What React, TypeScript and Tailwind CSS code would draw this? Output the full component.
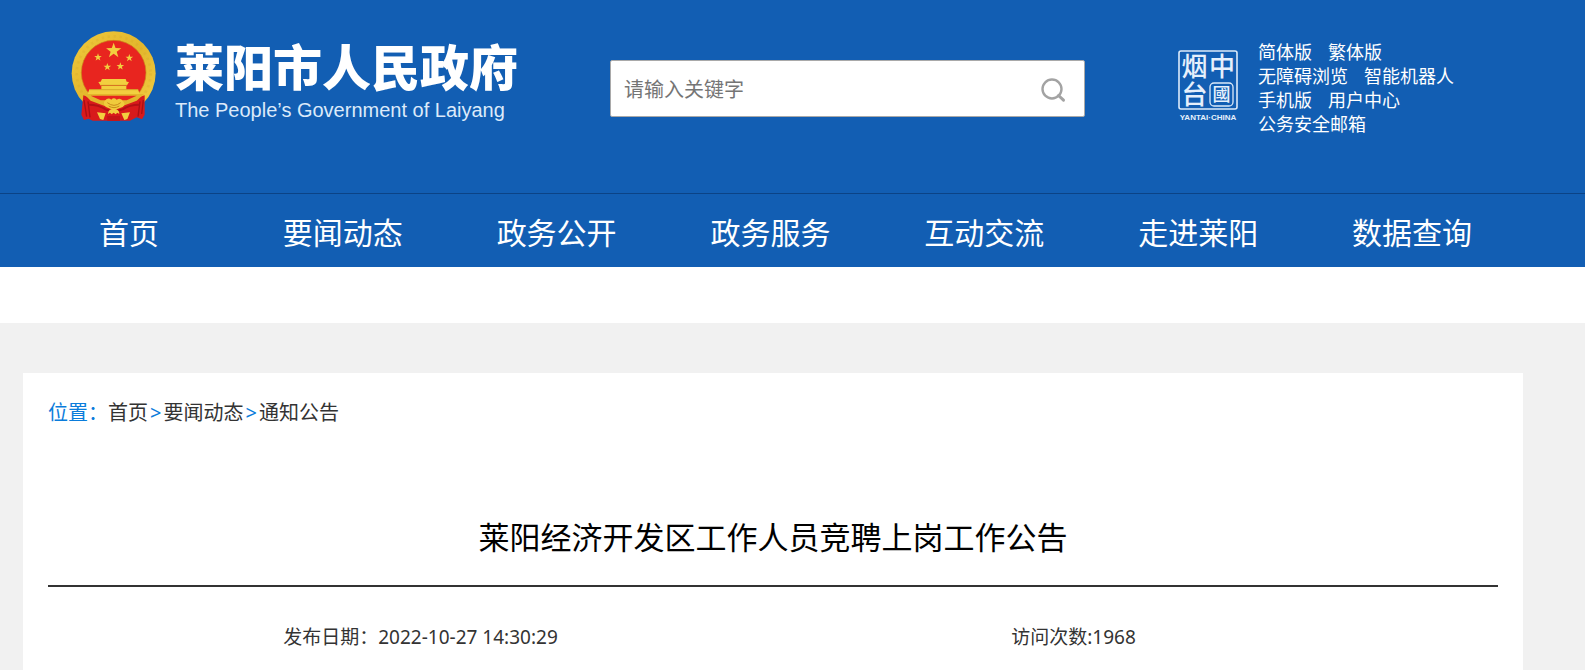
const navItems = ["首页", "要闻动态", "政务公开", "政务服务", "互动交流", "走进莱阳", "数据查询"];

const quickLinks = [
  ["简体版", "繁体版"],
  ["无障碍浏览", "智能机器人"],
  ["手机版", "用户中心"],
  ["公务安全邮箱"],
];

const starPoints = (cx: number, cy: number, r: number) =>
  Array.from({ length: 10 }, (_, i) => {
    const radius = i % 2 ? r * 0.4 : r;
    const angle = (Math.PI / 5) * i - Math.PI / 2;
    return `${cx + radius * Math.cos(angle)},${cy + radius * Math.sin(angle)}`;
  }).join(" ");

function Emblem() {
  return (
    <svg viewBox="30 30 264 276" className="h-[92px] w-[88px] shrink-0" aria-hidden="true">
      <defs>
        <linearGradient id="gold" x1="0" y1="0" x2="1" y2="1">
          <stop offset="0" stopColor="#efc93c" />
          <stop offset="0.5" stopColor="#e3b62c" />
          <stop offset="1" stopColor="#f3d045" />
        </linearGradient>
      </defs>
      <circle cx="161" cy="160" r="126" fill="url(#gold)" />
      <circle cx="161" cy="160" r="111" fill="none" stroke="#cf9d22" strokeWidth="8" strokeDasharray="7 11" opacity="0.2" />
      <circle cx="161" cy="158" r="97" fill="#e8251f" stroke="#c98a1a" strokeWidth="2" />
      <g fill="#f2cf3f">
        <polygon points={starPoints(161, 92, 24)} />
        <polygon points={starPoints(114, 112, 12)} />
        <polygon points={starPoints(208, 114, 12)} />
        <polygon points={starPoints(142, 141, 12)} />
        <polygon points={starPoints(181, 139, 12)} />
        <path d="M126 177h71l3 8 7 1-6 10H121l-6-10 7-1z" />
        <path d="M124 198h75v10h35l6 17H82l6-17h36z" />
      </g>
      <path d="M121 196h80M88 209h147" stroke="#c9961f" strokeWidth="2" />
      <path d="M70 226l22 8 40 16h58l40-16 24-8v58l-8 14-16-6-20 10H98l-12-6-14 4-8-16z" fill="#d81a1b" />
      <path d="M72 222h180l-22 20-58 22h-22l-58-22z" fill="#e3b62c" />
      <path d="M92 227h138l-30 14h-78z" fill="#e8251f" />
      <path d="M72 240l8 50M84 244l6 48M240 244l-6 46M250 240l-5 42" stroke="#a90f14" strokeWidth="4" />
      <path d="M134 243q10-12 20-4 7-8 16 0 12-8 20 6 8 8-2 16l-16 6q-10 7-20 0l-14-6q-10-8-4-18z" fill="#f0cb3c" />
      <path d="M142 248q20 16 40 0M146 258q16 10 32 0" fill="none" stroke="#c98a1a" strokeWidth="3" />
      <path d="M84 254q34 0 52 14 24 10 52 0 20-14 50-14" fill="none" stroke="#b31015" strokeWidth="6" />
      <path d="M111 277l26 3-7 20-10-3zM210 277l-26 3 9 20 9-3z" fill="#f2cf3f" />
      <path d="M144 282q0-15 17-15t17 15l-6-4-5 5-6-5-6 5-5-5z" fill="#f2cf3f" />
      <path d="M142 288h38v15h-38z" fill="#c51518" />
    </svg>
  );
}

function YantaiSeal() {
  return (
    <svg viewBox="0 0 62 72" className="h-[72px] w-[62px] shrink-0 overflow-visible" role="img" aria-label="YANTAI·CHINA">
      <g fill="none" stroke="#dceafa">
        <rect x="2" y="2" width="58" height="58" rx="2" strokeWidth="1.6" />
        <rect x="33" y="34" width="23" height="23" rx="4" strokeWidth="1.3" />
      </g>
      <g fill="#e6f0fc" fontWeight="500" className="font-['Noto_Sans_CJK_SC',sans-serif]" textAnchor="middle">
        <text x="17.5" y="27" fontSize="26">烟</text>
        <text x="17.5" y="55" fontSize="26">台</text>
        <text x="45" y="27" fontSize="26">中</text>
        <text x="44.5" y="52" fontSize="18">國</text>
      </g>
      <text x="31" y="71" fontSize="8" fontWeight="700" fill="#e6f0fc" textAnchor="middle" className="font-['Liberation_Sans',sans-serif]">
        YANTAI·CHINA
      </text>
    </svg>
  );
}

export default function App() {
  return (
    <div className="min-h-screen bg-[#f1f1f1] font-['Noto_Sans','Noto_Sans_CJK_SC',sans-serif] text-[#333333]">
      <header className="bg-[#125eb3] text-white">
        <div className="flex h-[193px] items-start pr-[62px] pl-[70px]">
          <a href="#" className="mt-[30px] flex w-[540px] shrink-0 items-start gap-[17px]">
            <Emblem />
            <span className="flex flex-col gap-1.5 pt-2 whitespace-nowrap">
              <span className="font-['Noto_Sans_CJK_SC',sans-serif] text-[49px] leading-[54px] font-black">莱阳市人民政府</span>
              <span className="font-['Liberation_Sans',sans-serif] text-[20px] leading-6 text-[#dceafa]">The People’s Government of Laiyang</span>
            </span>
          </a>
          <form role="search" onSubmit={(e) => e.preventDefault()} className="mt-[60px] flex h-[57px] w-[475px] shrink-0 items-center rounded-xs border border-[#a9a9a9] bg-white">
            <input
              type="text"
              aria-label="请输入关键字"
              placeholder="请输入关键字"
              className="h-full min-w-0 flex-1 pt-0.5 pl-[13px] text-[20px] text-[#333333] outline-none placeholder:text-[#757575]"
            />
            <button type="submit" aria-label="搜索" className="mt-0.5 mr-[18px]">
              <svg viewBox="0 0 26 26" className="size-[26px]" fill="none" stroke="#a3a3a3" strokeLinecap="round">
                <circle cx="12" cy="12" r="9.5" strokeWidth="2.4" />
                <path d="M18.5 18.5l5 4.7" strokeWidth="3" />
              </svg>
            </button>
          </form>
          <div className="mt-10 ml-[92px] flex items-start">
            <div className="pt-[9px]">
              <YantaiSeal />
            </div>
            <ul className="ml-[19px] text-[18px] leading-6 whitespace-nowrap">
              {quickLinks.map((row) => (
                <li key={row[0]} className="flex gap-4">
                  {row.map((label) => (
                    <a key={label} href="#">{label}</a>
                  ))}
                </li>
              ))}
            </ul>
          </div>
        </div>
        <nav className="border-t border-[#0b4386] pr-[66px] pl-[22px]">
          <ul className="grid h-[73px] grid-cols-7 items-center pt-1 text-center text-[30px]">
            {navItems.map((label) => (
              <li key={label} className="leading-10">
                <a href="#">{label}</a>
              </li>
            ))}
          </ul>
        </nav>
      </header>
      <div className="h-14 bg-white" />
      <div className="pt-[50px] pr-[62px] pl-[23px]">
        <main className="min-h-[297px] bg-white px-[25px] pt-[25px]">
          <nav aria-label="位置" className="text-[20px] leading-[30px] text-[#0a7cdb]">
            位置：<a href="#" className="text-[#333333]">首页</a>
            <span className="mx-0.5">&gt;</span>
            <a href="#" className="text-[#333333]">要闻动态</a>
            <span className="mx-0.5">&gt;</span>
            <a href="#" className="text-[#333333]">通知公告</a>
          </nav>
          <h1 className="mt-[85px] border-b-2 border-[#333333] pb-6 text-center text-[31px] leading-12 text-black">
            莱阳经济开发区工作人员竞聘上岗工作公告
          </h1>
          <div className="grid grid-cols-2 pt-[35px] text-center text-[19px] leading-[30px]">
            <p className="pl-5">发布日期：2022-10-27 14:30:29</p>
            <p className="pr-[124px]">访问次数:1968</p>
          </div>
        </main>
      </div>
    </div>
  );
}
